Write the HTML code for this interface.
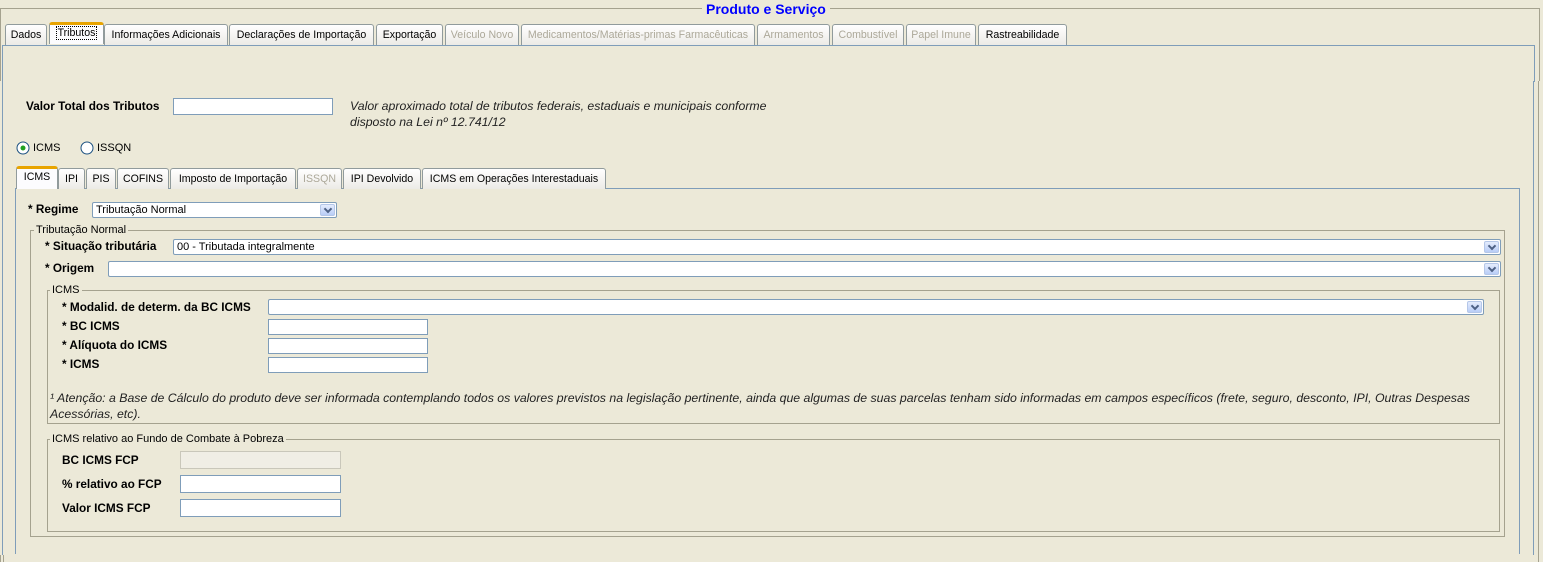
<!DOCTYPE html>
<html><head><meta charset="utf-8"><style>
*{box-sizing:border-box;margin:0;padding:0}
body{width:1543px;height:562px;background:#ECE9D8;position:relative;overflow:hidden;font-family:"Liberation Sans","DejaVu Sans",sans-serif;font-size:11px;color:#000}
.a{position:absolute}
.l{position:absolute;white-space:nowrap;line-height:13px}
.b{font-weight:bold;font-size:11.8px}
.tab{position:absolute;height:21px;border:1px solid #919B9C;border-bottom:none;border-radius:3px 3px 0 0;background:linear-gradient(#fff,#ECEBE6);text-align:center;line-height:20px;white-space:nowrap;font-size:10.6px}
.tab.d{color:#ACA899}
.tab.s{background:#fcfcfe;border-top:3px solid #E8A400;line-height:16px;height:22px}
.in{position:absolute;background:#fff;border:1px solid #7F9DB9;height:17px}
.cb{position:absolute;background:#fff;border:1px solid #7F9DB9;border-radius:2px;height:16px;line-height:14px;padding-left:3px;white-space:nowrap}
.cb i{position:absolute;right:1px;top:1px;width:15px;height:12px;border:1px solid #B5C7E8;border-radius:2px;background:linear-gradient(#E4ECFD,#B9CDF7)}
.cb i:after{content:"";position:absolute;left:4px;top:1px;width:4px;height:4px;border-right:2px solid #4D6185;border-bottom:2px solid #4D6185;transform:rotate(45deg)}
.fs{position:absolute;border:1px solid #A5A28F}
.lg{position:absolute;background:#ECE9D8;padding:0 2px;line-height:12px;white-space:nowrap}
.it{font-style:italic;font-size:12.3px;color:#222}
</style></head><body>
<div class="a" style="left:0;top:8px;width:1540px;height:73px;border:1px solid #A5A28F;border-bottom:none"></div>
<div class="l" style="left:702px;top:2px;padding:0 4px;background:#ECE9D8;color:#0000FF;font-size:14px;font-weight:bold;line-height:15px">Produto e Serviço</div>
<div class="a" style="left:2px;top:45px;width:1533px;height:37px;border:1px solid #7F9DB9;border-bottom:none"></div>
<div class="a" style="left:2px;top:45px;width:1px;height:510px;background:#7F9DB9"></div>
<div class="a" style="left:1533px;top:81px;width:1px;height:474px;background:#7F9DB9"></div>
<div class="a" style="left:1538px;top:81px;width:1px;height:481px;background:#A5A28F"></div>
<div class="a" style="left:0;top:555px;width:1px;height:7px;background:#A5A28F"></div>
<div class="a" style="left:3px;top:555px;width:1px;height:7px;background:#A5A28F"></div>
<div class="tab" style="left:5px;top:24px;width:42px">Dados</div>
<div class="tab s" style="left:49px;top:22px;width:55px"><span style="outline:1px dotted #000;padding:0 1px">Tributos</span></div>
<div class="tab" style="left:104px;top:24px;width:124px">Informações Adicionais</div>
<div class="tab" style="left:229px;top:24px;width:145px">Declarações de Importação</div>
<div class="tab" style="left:376px;top:24px;width:67px">Exportação</div>
<div class="tab d" style="left:445px;top:24px;width:74px">Veículo Novo</div>
<div class="tab d" style="left:521px;top:24px;width:234px">Medicamentos/Matérias-primas Farmacêuticas</div>
<div class="tab d" style="left:757px;top:24px;width:73px">Armamentos</div>
<div class="tab d" style="left:832px;top:24px;width:72px">Combustível</div>
<div class="tab d" style="left:906px;top:24px;width:70px">Papel Imune</div>
<div class="tab" style="left:978px;top:24px;width:89px">Rastreabilidade</div>
<div class="l b" style="left:26px;top:100px">Valor Total dos Tributos</div>
<div class="in" style="left:173px;top:98px;width:160px"></div>
<div class="l it" style="left:350px;top:98px;line-height:16px">Valor aproximado total de tributos federais, estaduais e municipais conforme<br>disposto na Lei nº 12.741/12</div>
<svg class="a" style="left:16px;top:141px" width="14" height="14"><circle cx="7" cy="7" r="6" fill="#fff" stroke="#1C5180"/><circle cx="7" cy="7" r="2.5" fill="#21A121"/></svg>
<div class="l" style="left:33px;top:142px">ICMS</div>
<svg class="a" style="left:80px;top:141px" width="14" height="14"><circle cx="7" cy="7" r="6" fill="#fff" stroke="#1C5180"/></svg>
<div class="l" style="left:97px;top:142px">ISSQN</div>
<div class="a" style="left:15px;top:188px;width:1505px;height:1px;background:#7F9DB9"></div>
<div class="a" style="left:15px;top:188px;width:1px;height:366px;background:#7F9DB9"></div>
<div class="a" style="left:1519px;top:188px;width:1px;height:366px;background:#7F9DB9"></div>
<div class="tab s" style="left:16px;top:166px;width:42px;height:23px;border-bottom:none">ICMS</div>
<div class="tab" style="left:58px;top:168px;width:27px">IPI</div>
<div class="tab" style="left:86px;top:168px;width:30px">PIS</div>
<div class="tab" style="left:117px;top:168px;width:52px">COFINS</div>
<div class="tab" style="left:170px;top:168px;width:126px">Imposto de Importação</div>
<div class="tab d" style="left:297px;top:168px;width:45px">ISSQN</div>
<div class="tab" style="left:343px;top:168px;width:78px">IPI Devolvido</div>
<div class="tab" style="left:422px;top:168px;width:184px">ICMS em Operações Interestaduais</div>
<div class="l b" style="left:28px;top:203px">* Regime</div>
<div class="cb" style="left:92px;top:202px;width:245px">Tributação Normal<i></i></div>
<div class="fs" style="left:30px;top:230px;width:1475px;height:307px"></div>
<div class="lg" style="left:34px;top:224px">Tributação Normal</div>
<div class="l b" style="left:45px;top:240px">* Situação tributária</div>
<div class="cb" style="left:173px;top:239px;width:1328px">00 - Tributada integralmente<i></i></div>
<div class="l b" style="left:45px;top:262px">* Origem</div>
<div class="cb" style="left:108px;top:261px;width:1393px"><i></i></div>
<div class="fs" style="left:47px;top:290px;width:1453px;height:134px"></div>
<div class="lg" style="left:50px;top:284px">ICMS</div>
<div class="l b" style="left:62px;top:301px">* Modalid. de determ. da BC ICMS</div>
<div class="cb" style="left:268px;top:299px;width:1216px"><i></i></div>
<div class="l b" style="left:62px;top:320px">* BC ICMS</div>
<div class="in" style="left:268px;top:319px;width:160px;height:16px"></div>
<div class="l b" style="left:62px;top:339px">* Alíquota do ICMS</div>
<div class="in" style="left:268px;top:338px;width:160px;height:16px"></div>
<div class="l b" style="left:62px;top:358px">* ICMS</div>
<div class="in" style="left:268px;top:357px;width:160px;height:16px"></div>
<div class="l it" style="left:50px;top:390px;line-height:16px">¹ Atenção: a Base de Cálculo do produto deve ser informada contemplando todos os valores previstos na legislação pertinente, ainda que algumas de suas parcelas tenham sido informadas em campos específicos (frete, seguro, desconto, IPI, Outras Despesas<br>Acessórias, etc).</div>
<div class="fs" style="left:47px;top:439px;width:1453px;height:93px"></div>
<div class="lg" style="left:50px;top:433px">ICMS relativo ao Fundo de Combate à Pobreza</div>
<div class="l b" style="left:62px;top:454px">BC ICMS FCP</div>
<div class="in" style="left:180px;top:451px;width:161px;height:18px;background:#F0EEE5;border-color:#C9C7BA"></div>
<div class="l b" style="left:62px;top:478px">% relativo ao FCP</div>
<div class="in" style="left:180px;top:475px;width:161px;height:18px"></div>
<div class="l b" style="left:62px;top:502px">Valor ICMS FCP</div>
<div class="in" style="left:180px;top:499px;width:161px;height:18px"></div>
</body></html>
